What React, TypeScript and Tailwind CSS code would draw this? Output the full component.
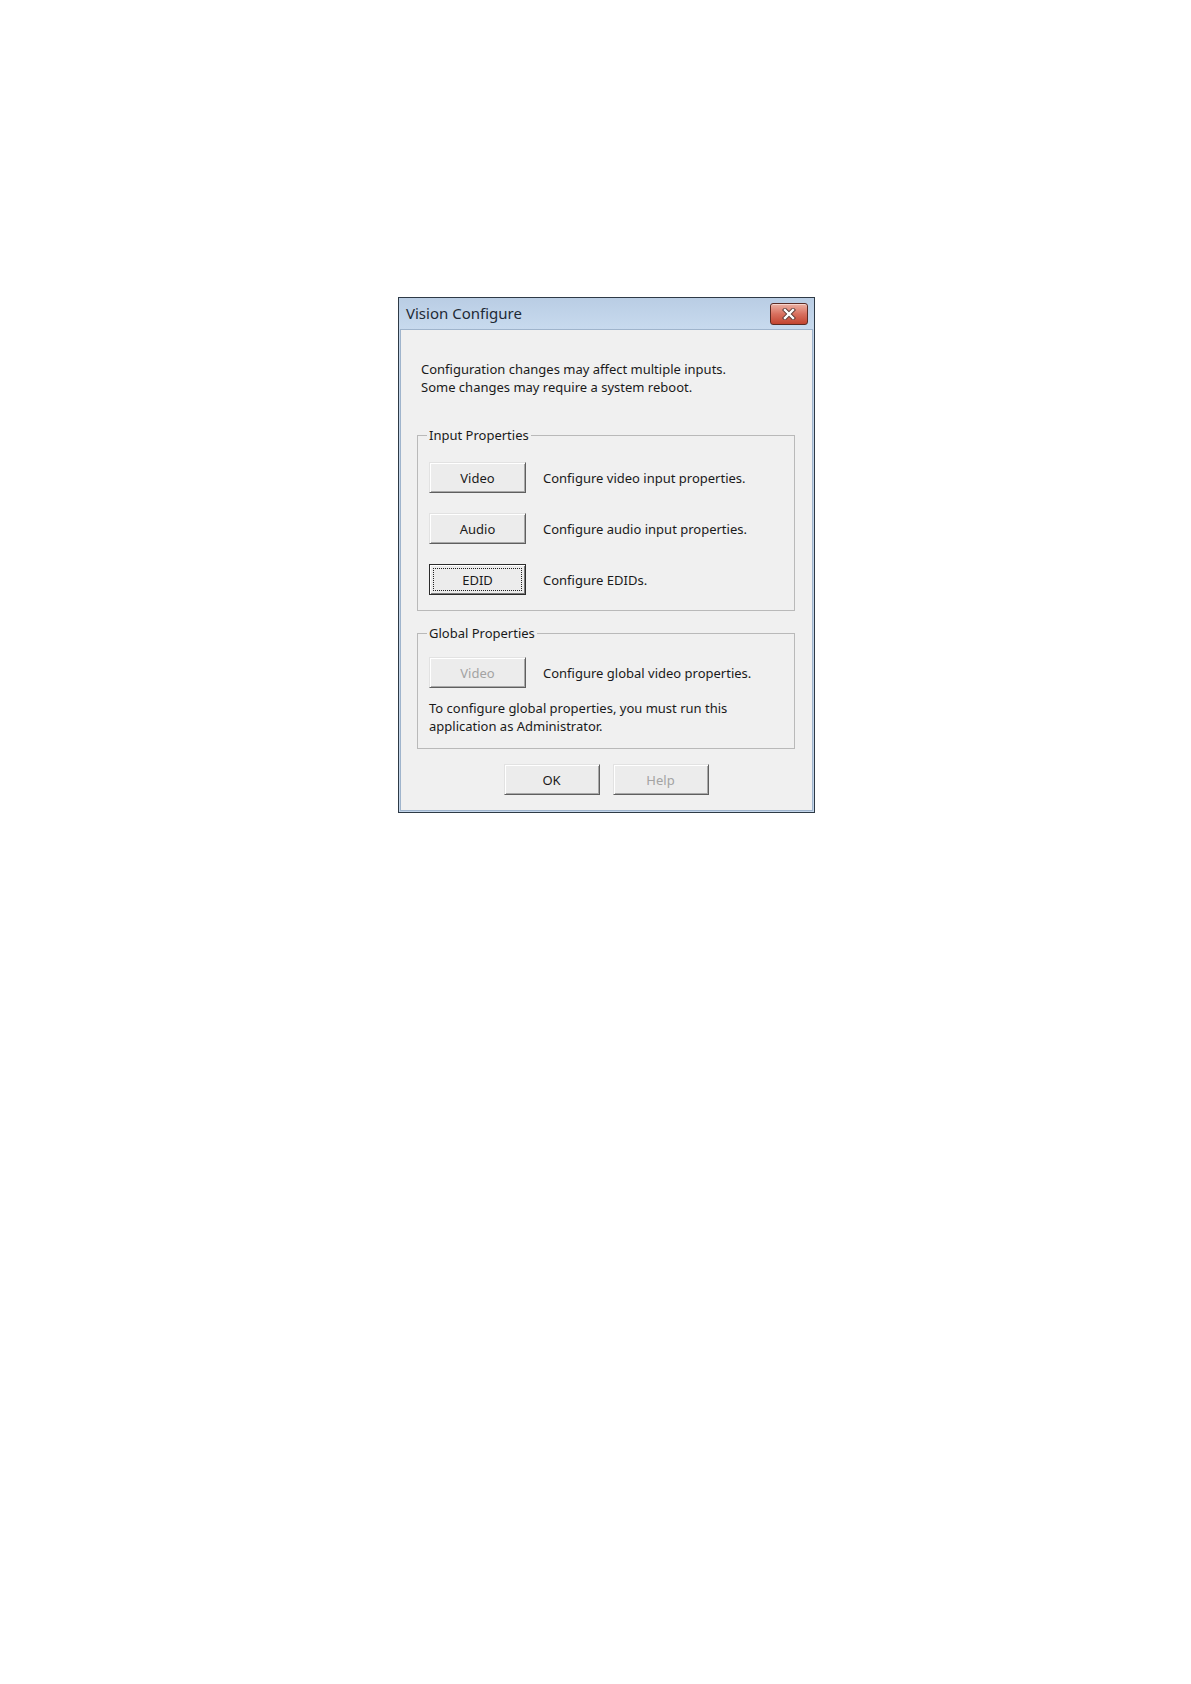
import React from "react";

// Classic Win7-style push button
function WinButton({
  label,
  disabled = false,
  isDefault = false,
  width = "w-[97px]",
}: {
  label: string;
  disabled?: boolean;
  isDefault?: boolean;
  width?: string;
}) {
  if (isDefault) {
    return (
      <button
        type="button"
        className={`${width} h-[31px] shrink-0 flex border border-[#2b2b2b] bg-[#ececec] p-[1px] shadow-[inset_1px_1px_0_#ffffff,inset_-1px_-1px_0_#7a7a7a]`}
      >
        <span className="flex-1 m-[2px] flex items-center justify-center border border-dotted border-[#202020] text-[13px] text-[#1a1a1a]">
          {label}
        </span>
      </button>
    );
  }
  return (
    <button
      type="button"
      disabled={disabled}
      className={`${width} h-[31px] shrink-0 flex items-center justify-center border border-t-[#e2e2e2] border-l-[#e2e2e2] border-r-[#5f5f5f] border-b-[#5f5f5f] bg-[#ececec] shadow-[inset_1px_1px_0_#ffffff,inset_-1px_-1px_0_#a9a9a9] text-[13px] ${
        disabled ? "text-[#a3a3a3]" : "text-[#1a1a1a]"
      }`}
    >
      {label}
    </button>
  );
}

function CloseButton() {
  return (
    <div className="w-[38px] h-[22px] rounded-[3px] border border-[#5b2b24] bg-gradient-to-b from-[#eab0a3] via-[#d8705f] to-[#c2432f] shadow-[inset_0_1px_0_#f6d3cb] flex items-center justify-center">
      <svg width="14" height="12" viewBox="0 0 14 12">
        <path d="M3 2 L11 10 M11 2 L3 10" stroke="#5a3a36" strokeWidth="4.2" strokeLinecap="square" />
        <path d="M3 2 L11 10 M11 2 L3 10" stroke="#ffffff" strokeWidth="2.4" strokeLinecap="square" />
      </svg>
    </div>
  );
}

function Row({ button, text }: { button: React.ReactNode; text: string }) {
  return (
    <div className="flex items-center gap-[17px]">
      {button}
      <span className="text-[13px] text-[#1a1a1a]">{text}</span>
    </div>
  );
}

export default function App() {
  return (
    <div
      className="min-h-[1684px] bg-white pt-[297px] pl-[398px]"
      style={{ fontFamily: '"Noto Sans", "Open Sans", sans-serif' }}
    >
      <div className="w-[417px] h-[516px] flex flex-col border border-[#2e3a46] bg-[#c4d6eb]">
        {/* title bar */}
        <div className="h-[31px] flex items-start justify-between bg-gradient-to-b from-[#b9cde4] to-[#c8daee] pl-[7px] pr-[6px]">
          <span className="mt-[5px] text-[15px] leading-[20px] text-[#1e2a36]">Vision Configure</span>
          <div className="mt-[5px]">
            <CloseButton />
          </div>
        </div>

        {/* body */}
        <div className="flex-1 mx-[1px] mb-[1px] border border-[#9fb4cc] bg-[#f0f0f0] pl-[16px] pr-[17px] pt-[30px] leading-[18px]">
          <p className="pl-[4px] text-[13px] text-[#1a1a1a]">
            Configuration changes may affect multiple inputs.
            <br />
            Some changes may require a system reboot.
          </p>

          <fieldset className="mt-[30px] border border-[#b9b9b9] pl-[11px] pr-[10px] pt-[18px] pb-[15px]">
            <legend className="ml-[-2px] px-[2px] text-[13px] text-[#1a1a1a]">Input Properties</legend>
            <div className="flex flex-col gap-[20px]">
              <Row button={<WinButton label="Video" />} text="Configure video input properties." />
              <Row button={<WinButton label="Audio" />} text="Configure audio input properties." />
              <Row button={<WinButton label="EDID" isDefault />} text="Configure EDIDs." />
            </div>
          </fieldset>

          <fieldset className="mt-[13px] border border-[#b9b9b9] pl-[11px] pr-[10px] pt-[15px] pb-[13px]">
            <legend className="ml-[-2px] px-[2px] text-[13px] text-[#1a1a1a]">Global Properties</legend>
            <Row button={<WinButton label="Video" disabled />} text="Configure global video properties." />
            <p className="mt-[11px] text-[13px] text-[#1a1a1a]">
              To configure global properties, you must run this
              <br />
              application as Administrator.
            </p>
          </fieldset>

          <div className="mt-[15px] flex justify-center gap-[13px]">
            <WinButton label="OK" width="w-[96px]" />
            <WinButton label="Help" width="w-[96px]" disabled />
          </div>
        </div>
      </div>
    </div>
  );
}
